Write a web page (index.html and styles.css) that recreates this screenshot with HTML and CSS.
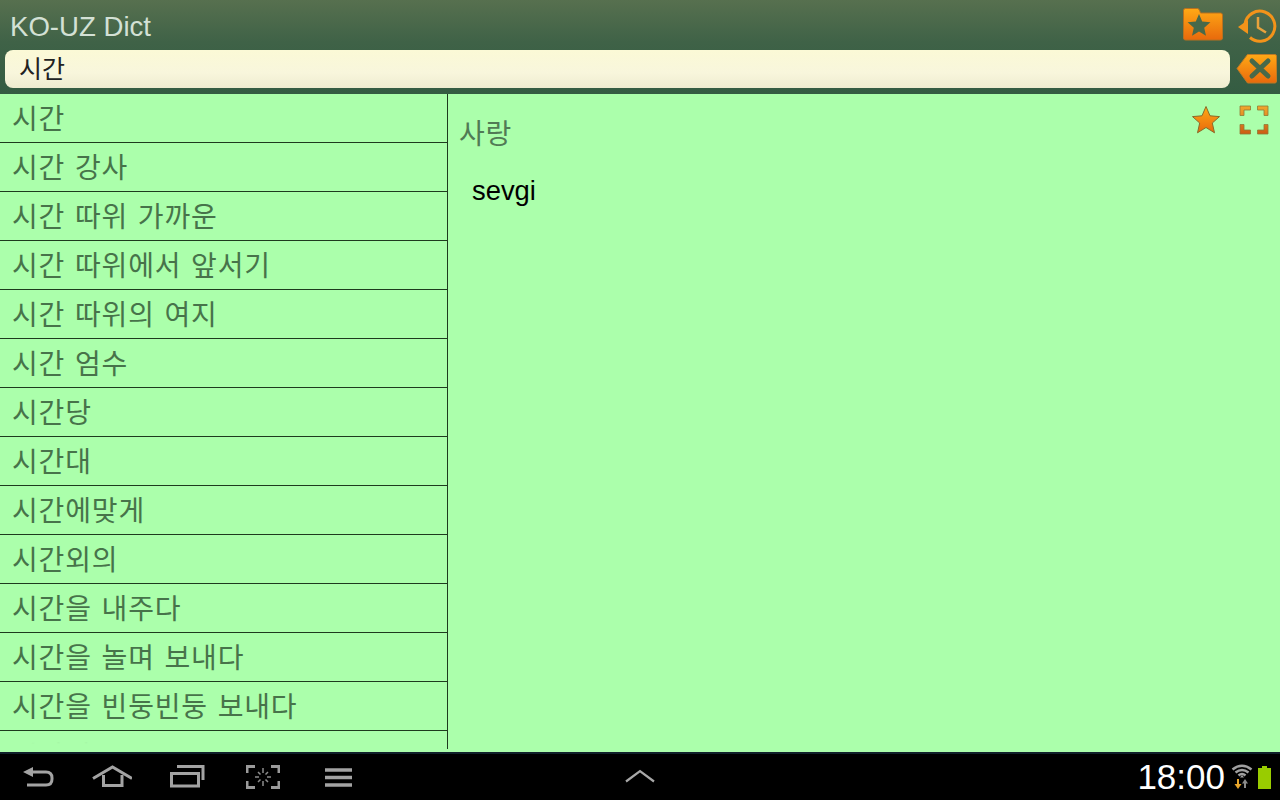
FILE: index.html
```html
<!DOCTYPE html>
<html lang="ko">
<head>
    <meta charset="UTF-8">
    <meta name="viewport" content="width=device-width, initial-scale=1.0">
    <title>KO-UZ Dict</title>
    <link rel="stylesheet" href="styles.css">
</head>
<body>
    <svg class="defs" width="0" height="0">
        <defs>
            <linearGradient id="orange" x1="0" y1="0" x2="0" y2="1">
                <stop offset="0" stop-color="#ffa915"/>
                <stop offset="1" stop-color="#e8690c"/>
            </linearGradient>
            <linearGradient id="orange-dim" x1="0" y1="0" x2="0" y2="30" gradientUnits="userSpaceOnUse">
                <stop offset="0" stop-color="#f2ab2e"/>
                <stop offset="1" stop-color="#cb5a12"/>
            </linearGradient>
        </defs>
    </svg>
    <div class="app">
        <header class="header">
            <div class="title-row">
                <div class="title">KO-UZ Dict</div>
                <svg class="icon-folder" width="42" height="34" viewBox="0 0 42 34">
                    <path d="M1.500 2.500Q1.500 0.500 3.500 0.500H15.500Q17.500 0.500 18.500 5H38.500Q40.500 5 40.500 7V30Q40.500 32 38.500 32H3.500Q1.500 32 1.500 30Z" fill="url(#orange)" stroke="#b9701e"/>
                    <path d="M17 6L20.200 13.600 28.400 14.300 22.200 19.700 24 27.700 17 23.500 10 27.700 11.800 19.700 5.600 14.300 13.800 13.600Z" fill="#47694a"/>
                </svg>
                <svg class="icon-history" width="40" height="36" viewBox="0 0 40 36">
                    <path d="M7 17A15 15 0 1 1 12 30.500" fill="none" stroke="#f3931a" stroke-width="3"/>
                    <path d="M0 20L10 13V27Z" fill="#f3931a"/>
                    <path d="M20 10V20.500L28 25.500" fill="none" stroke="#e9a23c" stroke-width="2.500"/>
                </svg>
            </div>
            <div class="search-row">
                <input class="search" type="text" value="시간">
                <svg class="icon-clear" width="42" height="32" viewBox="0 0 42 32">
                    <path d="M2 15.500L12.500 1.500H40Q41.500 1.500 41.500 3V28Q41.500 30 40 30H12.500Z" fill="url(#orange)" stroke="#bd7a24"/>
                    <path d="M17 8L33 23M33 8L17 23" stroke="#47694a" stroke-width="5" stroke-linecap="round"/>
                </svg>
            </div>
        </header>
        <main class="content">
            <div class="list-wrap">
                <ul class="word-list">
                    <li>시간</li>
                    <li>시간 강사</li>
                    <li>시간 따위 가까운</li>
                    <li>시간 따위에서 앞서기</li>
                    <li>시간 따위의 여지</li>
                    <li>시간 엄수</li>
                    <li>시간당</li>
                    <li>시간대</li>
                    <li>시간에맞게</li>
                    <li>시간외의</li>
                    <li>시간을 내주다</li>
                    <li>시간을 놀며 보내다</li>
                    <li>시간을 빈둥빈둥 보내다</li>
                    <li>시간의</li>
                </ul>
                <div class="list-fade"></div>
            </div>
            <section class="detail">
                <div class="detail-tools">
                    <svg class="icon-star" width="30" height="30" viewBox="0 0 30 30">
                        <path d="M15 1.500L19 10.800 28.500 11.600 21.300 18 23.500 27.800 15 22.500 6.500 27.800 8.700 18 1.500 11.600 11 10.800Z" fill="url(#orange)" stroke="#8a6a2a"/>
                    </svg>
                    <svg class="icon-full" width="30" height="30" viewBox="0 0 30 30">
                        <path d="M1 10.500V1H11.500V5H5V10.500ZM18.500 1H29V10.500H25V5H18.500ZM1 19.500H5V25H11.500V29H1ZM25 19.500H29V29H18.500V25H25Z" fill="url(#orange-dim)" stroke="#8f7a35" stroke-width="0.800"/>
                    </svg>
                </div>
                <h2 class="headword">사랑</h2>
                <p class="meaning">sevgi</p>
            </section>
        </main>
        <footer class="sysbar">
            <div class="nav-left">
                <svg width="34" height="24" viewBox="0 0 34 24">
                    <path d="M10 7H24Q30 7 30 13V14Q30 20 24 20H5" fill="none" stroke="#a3a3a3" stroke-width="3"/>
                    <path d="M1 7L11 2V12Z" fill="#a3a3a3"/>
                </svg>
                <svg class="nav-home" width="40" height="24" viewBox="0 0 40 24">
                    <path d="M1 13.500L20.500 2 40 13.500" fill="none" stroke="#a3a3a3" stroke-width="3"/>
                    <path d="M11.500 10V20.500H30V10" fill="none" stroke="#a3a3a3" stroke-width="3"/>
                </svg>
                <svg class="nav-recent" width="36" height="24" viewBox="0 0 36 24">
                    <path d="M7 1.500H33V15" fill="none" stroke="#a3a3a3" stroke-width="3"/>
                    <rect x="1.500" y="8.500" width="27" height="12.500" fill="none" stroke="#a3a3a3" stroke-width="3"/>
                </svg>
                <svg class="nav-shot" width="34" height="24" viewBox="0 0 34 24">
                    <path d="M1 8V1.500H9M25 1.500H33V8M1 16V22.500H9M25 22.500H33V16" fill="none" stroke="#9a9a9a" stroke-width="3"/>
                    <path d="M17 3V8M17 16V21M9 12H13M21 12H25M12 7L14.500 9.500M22 7L19.500 9.500M12 17L14.500 14.500M22 17L19.500 14.500" stroke="#8c8c8c" stroke-width="1.500"/>
                </svg>
                <svg class="nav-menu" width="27" height="20" viewBox="0 0 27 20">
                    <path d="M0 3H27M0 10.500H27M0 18H27" stroke="#a3a3a3" stroke-width="3.400"/>
                </svg>
            </div>
            <svg class="nav-up" width="30" height="14" viewBox="0 0 30 14">
                <path d="M1 12.500L15 2 29 12.500" fill="none" stroke="#a8a8a8" stroke-width="2.200"/>
            </svg>
            <div class="status">
                <span class="clock">18:00</span>
                <svg width="22" height="26" viewBox="0 0 22 26">
                    <path d="M1.500 5.500Q11 -2 20.500 5.500" fill="none" stroke="#a0a0a0" stroke-width="2.500"/>
                    <path d="M4.500 8.500Q11 3.500 17.500 8.500" fill="none" stroke="#a0a0a0" stroke-width="2.500"/>
                    <path d="M7.500 11.500Q11 8.500 14.500 11.500" fill="none" stroke="#a0a0a0" stroke-width="2.500"/>
                    <path d="M9 13.500L11 11 13 13.500Z" fill="#a0a0a0"/>
                    <path d="M7 15V21" stroke="#e8a52a" stroke-width="2"/>
                    <path d="M3.500 20H10.500L7 25Z" fill="#e8a52a"/>
                    <path d="M14 24V19" stroke="#8a8a8a" stroke-width="2"/>
                    <path d="M11 19.500H17L14 15Z" fill="#8a8a8a"/>
                </svg>
                <svg class="battery" width="13" height="23" viewBox="0 0 13 23">
                    <path d="M4 0H9V2H13V23H0V2H4Z" fill="#99cc00"/>
                </svg>
            </div>
        </footer>
    </div>
</body>
</html>
```

FILE: styles.css
```css
html, body { margin: 0; padding: 0; }
body { font-family: "Liberation Sans", "Noto Sans CJK KR", sans-serif; background: #000; }
.defs { position: absolute; }
.app { width: 1280px; height: 800px; display: flex; flex-direction: column; overflow: hidden; }

.header { height: 94px; box-sizing: border-box; background: linear-gradient(#57704f, #3f6247 45%, #345c42); }
.title-row { height: 50px; display: flex; align-items: flex-start; }
.title { flex: 1; padding-left: 10px; padding-top: 11px; font-size: 27.6px; color: #d3e0d5; }
.icon-folder { margin-top: 8px; }
.icon-history { margin-left: 14px; margin-right: 2px; margin-top: 7px; }
.search-row { display: flex; align-items: flex-start; padding-left: 5px; }
.search { width: 1225px; height: 38px; box-sizing: border-box; padding: 0 14px 4px; border: none; outline: none; border-radius: 8px; background: linear-gradient(#fbf9d6, #f8f6dc 60%, #efecd0); font-family: "Noto Sans CJK KR", sans-serif; font-size: 25px; color: #222; }
.icon-clear { margin-left: 5px; margin-top: 3px; }

.content { flex: 1; min-height: 0; display: flex; background: #abffab; }
.list-wrap { position: relative; width: 447px; height: 655px; border-right: 1px solid #1e3a1e; overflow: hidden; }
.word-list { list-style: none; margin: 0; padding: 0; }
.word-list li { height: 48px; line-height: 46px; border-bottom: 1px solid #1e3a1e; padding-left: 12px; font-family: "Noto Sans CJK KR", sans-serif; font-size: 28px; letter-spacing: 0.85px; word-spacing: 1px; color: #47734a; white-space: nowrap; }
.list-fade { position: absolute; left: 0; right: 0; bottom: 0; height: 16px; background: linear-gradient(rgba(171, 255, 171, 0.7), #abffab 70%); }

.detail { position: relative; flex: 1; }
.detail-tools { position: absolute; top: 11px; right: 11px; display: flex; gap: 18px; }
.headword { margin: 19px 0 0 11px; font-family: "Noto Sans CJK KR", sans-serif; font-size: 28px; letter-spacing: 0.85px; line-height: 38px; font-weight: normal; color: #517a55; }
.meaning { margin: 22px 0 0 24px; font-size: 27.4px; line-height: 36px; color: #000; }

.sysbar { height: 48px; box-sizing: border-box; border-top: 2px solid #10202a; background: #000; display: grid; grid-template-columns: 1fr auto 1fr; align-items: center; }
.nav-left { display: flex; align-items: center; padding-left: 22px; }
.nav-home { margin-left: 36px; }
.nav-recent { margin-left: 38px; }
.nav-shot { margin-left: 40px; }
.nav-menu { margin-left: 45px; }
.nav-up { margin-top: -3px; }
.status { display: flex; align-items: center; justify-content: flex-end; padding-right: 9px; }
.clock { font-size: 35px; color: #fff; margin-right: 6px; }
.battery { margin-left: 5px; }
```
